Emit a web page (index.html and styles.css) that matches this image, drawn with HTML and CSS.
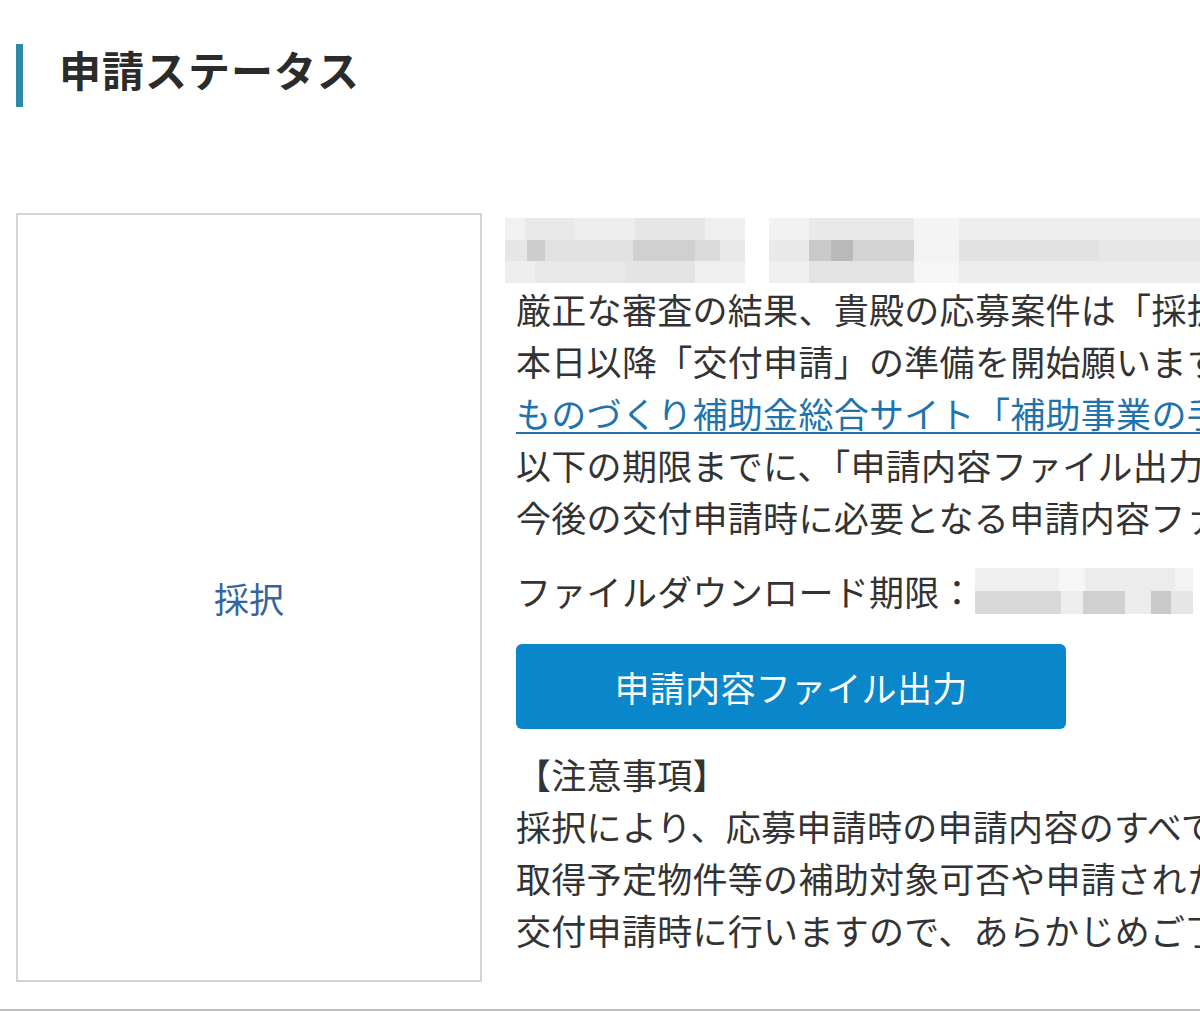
FILE: index.html
```html
<!DOCTYPE html>
<html lang="ja">
  <head>
    <meta charset="UTF-8" />
    <meta name="viewport" content="width=device-width, initial-scale=1.0" />
    <title>申請ステータス</title>
    <link rel="stylesheet" href="styles.css">
  </head>
  <body>
    <div class="page">
      <!-- Section title -->
      <h2 class="sectionTitle">申請ステータス</h2>

      <!-- Status row -->
      <div class="statusRow">
        <div class="statusBox">
          <span class="statusLabel">採択</span>
        </div>

        <div class="statusDetail">
          <!-- masked applicant info -->
          <div class="mosaicLine">
            <div class="mosaic mosaicA">
              <div class="mRow mA1"></div>
              <div class="mRow mA2"></div>
              <div class="mRow mA3"></div>
            </div>
            <div class="mosaic mosaicB">
              <div class="mRow mB1"></div>
              <div class="mRow mB2"></div>
              <div class="mRow mB3"></div>
            </div>
          </div>

          <p class="line">厳正な審査の結果、貴殿の応募案件は「採択」となりましたのでお知らせします。</p>
          <p class="line">本日以降「交付申請」の準備を開始願います。詳しくは下記をご確認ください。</p>
          <p class="line"><a href="#" class="link">ものづくり補助金総合サイト「補助事業の手引き」</a></p>
          <p class="line">以下の期限までに、「申請内容ファイル出力」ボタンを押下し、</p>
          <p class="line">今後の交付申請時に必要となる申請内容ファイルを保存してください。</p>

          <p class="line deadline">
            ファイルダウンロード期限：<span class="mosaic mosaicDate">
              <span class="mRow mD1"></span>
              <span class="mRow mD2"></span>
            </span>
          </p>

          <button type="button" class="exportButton">申請内容ファイル出力</button>

          <p class="line notesTitle">【注意事項】</p>
          <p class="line">採択により、応募申請時の申請内容のすべてが認められたものではありません。</p>
          <p class="line">取得予定物件等の補助対象可否や申請された経費の妥当性等の確認は、</p>
          <p class="line">交付申請時に行いますので、あらかじめご了承ください。</p>
        </div>
      </div>
    </div>
  </body>
</html>
```

FILE: styles.css
```css
/* Reset */
* {
  margin: 0;
  padding: 0;
  box-sizing: border-box;
}

body {
  font-family: "Noto Sans CJK JP", "Noto Sans", sans-serif;
  background-color: #ffffff;
  color: #333;
  overflow: hidden;
}

/* Page wrapper */
.page {
  width: 1200px;
  height: 1011px;
  padding: 44px 0 0 16px;
  border-bottom: 2px solid #bdbdbd;
  overflow: hidden;
}

.sectionTitle {
  height: 63px;
  line-height: 50px;
  padding-left: 36px;
  border-left: 7px solid #2b8aa8;
  font-size: 42px;
  font-weight: 700;
  color: #2b2b2b;
  letter-spacing: 1px;
}

/* Status row */
.statusRow {
  display: flex;
  align-items: stretch;
  margin-top: 106px;
}

.statusBox {
  flex: 0 0 466px;
  display: flex;
  align-items: center;
  justify-content: center;
  border: 2px solid #d4d4d4;
}

.statusLabel {
  font-size: 35px;
  color: #3563a0;
}

.statusDetail {
  padding: 5px 0 26px 34px;
  white-space: nowrap;
}

.line {
  font-size: 35px;
  line-height: 52px;
  letter-spacing: 0.3px;
  color: #333;
}

.link {
  color: #1f73ad;
  text-decoration: underline;
  text-underline-offset: 4px;
  text-decoration-thickness: 2px;
}

.deadline {
  display: flex;
  align-items: center;
  margin-top: 22px;
}

.exportButton {
  display: block;
  width: 550px;
  height: 85px;
  margin-top: 27px;
  background-color: #0a86ca;
  color: #ffffff;
  font-family: inherit;
  font-size: 35px;
  letter-spacing: 0.3px;
  border: none;
  border-radius: 6px;
  cursor: pointer;
}

.notesTitle {
  margin-top: 19px;
}

/* Masked (pixelated) text */
.mosaicLine {
  display: flex;
  gap: 24px;
  height: 65px;
  margin-left: -11px;
}

.mosaic {
  display: flex;
  flex-direction: column;
}

.mosaicA {
  width: 240px;
}

.mosaicB {
  width: 440px;
}

.mRow {
  display: block;
  flex: 1;
}

.mA1 {
  background: linear-gradient(to right, #f1f1f1 0 20px, #e9e9e9 20px 70px, #eeeeee 70px 130px, #e6e6e6 130px 200px, #efefef 200px);
}

.mA2 {
  background: linear-gradient(to right, #e6e6e6 0 22px, #cdcdcd 22px 40px, #e1e1e1 40px 128px, #d0d0d0 128px 190px, #dadada 190px 215px, #e9e9e9 215px);
}

.mA3 {
  background: linear-gradient(to right, #eeeeee 0 30px, #e8e8e8 30px 120px, #e4e4e4 120px 190px, #efefef 190px);
}

.mB1 {
  background: linear-gradient(to right, #f2f2f2 0 40px, #e9e9e9 40px 145px, #f4f4f4 145px 190px, #eeeeee 190px);
}

.mB2 {
  background: linear-gradient(to right, #e9e9e9 0 40px, #c9c9c9 40px 62px, #b9b9b9 62px 84px, #d4d4d4 84px 145px, #f3f3f3 145px 190px, #e2e2e2 190px 330px, #e7e7e7 330px);
}

.mB3 {
  background: linear-gradient(to right, #efefef 0 40px, #e3e3e3 40px 145px, #f6f6f6 145px 190px, #ececec 190px);
}

.mosaicDate {
  width: 218px;
  height: 46px;
}

.mD1 {
  background: linear-gradient(to right, #efefef 0 84px, #f6f6f6 84px 110px, #ececec 110px 200px, #f3f3f3 200px);
}

.mD2 {
  background: linear-gradient(to right, #d9d9d9 0 86px, #eeeeee 86px 108px, #d0d0d0 108px 150px, #ececec 150px 176px, #c9c9c9 176px 196px, #e6e6e6 196px);
}
```
